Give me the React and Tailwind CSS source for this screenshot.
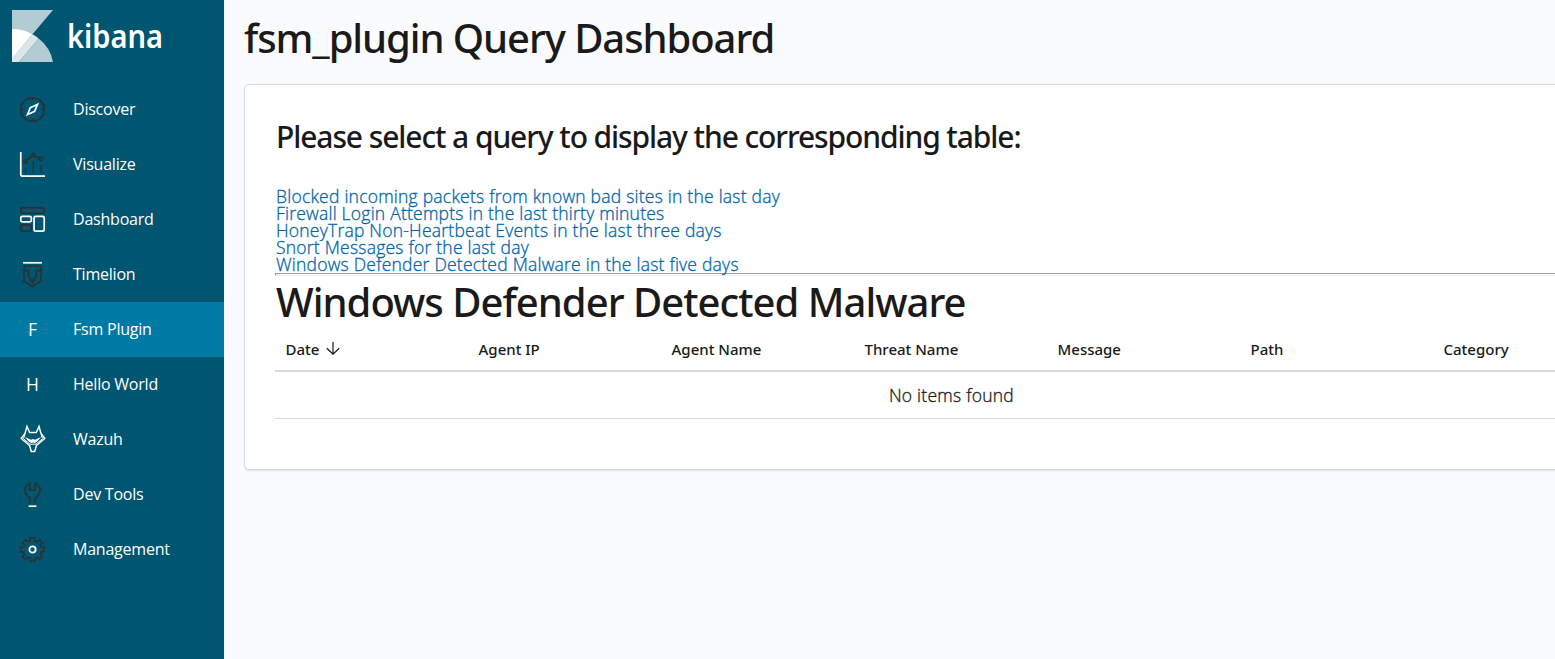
const DARK = '#2d3032'

function Icon({ children }) {
  return (
    <svg className="size-[25px] overflow-visible" viewBox="0 0 32 32" fill="none" stroke={DARK} strokeWidth="2.2">
      {children}
    </svg>
  )
}

const DiscoverIcon = () => (
  <Icon>
    <circle cx="16" cy="16" r="15" />
    <path d="M16 1v3.500M16 27.500v3.500M1 16h3.500M27.500 16h3.500" />
    <path stroke="#fff" d="M9.600 22.600l3.600-9 9.200-4.200-3.700 9z" />
  </Icon>
)

const VisualizeIcon = () => (
  <Icon>
    <path stroke="#fff" d="M1 0v28a3 3 0 0 0 3 3h28" />
    <path strokeWidth="1.800" d="M7 20v7M17 12v15M27 17v10" />
    <circle cx="7" cy="12" r="2" />
    <circle cx="17" cy="4" r="2" />
    <circle cx="27" cy="9" r="2" />
    <path d="M8.600 10.600l6.800-5.400M18.800 5l6.400 3.200" />
  </Icon>
)

const DashboardIcon = () => (
  <Icon>
    <rect x="1" y="1" width="30" height="7" rx="2" />
    <rect x="1" y="23" width="13.500" height="8" rx="2" />
    <rect stroke="#fff" x="1" y="12" width="13.500" height="7" rx="2" />
    <rect stroke="#fff" x="18" y="12" width="13" height="19" rx="2" />
  </Icon>
)

const TimelionIcon = () => (
  <Icon>
    <path stroke="#fff" d="M4 1h24" />
    <path strokeWidth="2" d="M5 5h22v19.500L16 31 5 24.500z" />
    <path strokeWidth="2" d="M5 11h6v7.500l5 6 5-6V11h6M13.500 21.500v2.500l2.500 3 2.500-3v-2.500" />
  </Icon>
)

const WazuhIcon = () => (
  <svg className="h-[30px] w-[26px] overflow-visible" viewBox="0 0 26 30" fill="none" stroke="#fff" strokeWidth="1.500">
    <path d="M7 1.500L5 8.500 1.200 13.500 9.500 20.500 11.300 26.500h3.400L16.500 20.500l8.300-7L21 8.500 19 1.500 16.300 7.500H9.700z" />
    <path strokeWidth="1" d="M5 9.500l-1.500 4.200 6.500 5.500h6l6.500-5.500L21 9.500" />
    <path fill="#fff" stroke="none" d="M4.800 12l6.200 2.800 2-.8 2 .8 6.200-2.800-4.400 5-2.800 1.200-1-1-1 1-2.800-1.200z" />
  </svg>
)

const DevToolsIcon = () => (
  <Icon>
    <path stroke="#fff" d="M11 31h10" />
    <path d="M12.500 27.500v-7.700A10 10 0 0 1 12.500 1.500V10h7V1.500a10 10 0 0 1 0 18.300v7.700" />
  </Icon>
)

const ManagementIcon = () => (
  <Icon>
    <circle stroke="#fff" strokeWidth="2.400" cx="16" cy="16" r="4" />
    <path strokeWidth="1.900" d="M13 1h6v4l3 1.300 3-2.800 3.700 3.800-2.700 2.900 1.200 2.800H31v6h-3.800L26 22l2.700 2.800-3.900 3.900L22 26l-3 1.200V31h-6v-3.800L10 26l-2.800 2.700-3.900-3.900L6 22l-1.200-3H1v-6h3.800L6 10.200 3.300 7.300 7 3.500l3 2.800L13 5z" />
  </Icon>
)

const Letter = ({ children }) => <span className="text-[17.5px] leading-none text-white">{children}</span>

const nav = [
  ['Discover', <DiscoverIcon />],
  ['Visualize', <VisualizeIcon />],
  ['Dashboard', <DashboardIcon />],
  ['Timelion', <TimelionIcon />],
  ['Fsm Plugin', <Letter>F</Letter>],
  ['Hello World', <Letter>H</Letter>],
  ['Wazuh', <WazuhIcon />],
  ['Dev Tools', <DevToolsIcon />],
  ['Management', <ManagementIcon />],
]

const queries = [
  'Blocked incoming packets from known bad sites in the last day',
  'Firewall Login Attempts in the last thirty minutes',
  'HoneyTrap Non-Heartbeat Events in the last three days',
  'Snort Messages for the last day',
  'Windows Defender Detected Malware in the last five days',
]

const columns = ['Date', 'Agent IP', 'Agent Name', 'Threat Name', 'Message', 'Path', 'Category']

function Sidebar() {
  return (
    <nav className="w-56 shrink-0 bg-[#005571] text-white">
      <div className="flex h-[82px] items-start pl-3 pt-2.5">
        <svg className="h-[52px] w-[41px]" viewBox="0 0 41 52" shapeRendering="geometricPrecision">
          <path fill="#b2ccd4" d="M0 0h41L20.500 24.300 0 30z" />
          <path fill="#b2ccd4" d="M26.700 28.500A38 38 0 0 1 41 52H7z" />
          <path fill="#d9e6ea" d="M20.500 24.300a41 41 0 0 1 6.200 4.200L7 52H0v-4z" />
          <path fill="#fff" d="M0 19a41 41 0 0 1 20.500 5.300L0 48.500z" />
        </svg>
        <span className="ml-[14px] mt-[3px] origin-left scale-x-[.88] font-['Noto_Sans'] text-[33px] font-semibold leading-[46px]">kibana</span>
      </div>
      {nav.map(([label, icon]) => (
        <a key={label} className={`flex h-[55px] items-center ${label === 'Fsm Plugin' ? 'bg-[#0079a5]' : ''}`}>
          <span className="flex w-[65px] justify-center">{icon}</span>
          <span className="ml-2 pb-0.5 text-[16px] leading-5 tracking-[-0.22px]">{label}</span>
        </a>
      ))}
    </nav>
  )
}

export default function App() {
  return (
    <div className="flex h-[659px] w-[1555px] overflow-hidden bg-[#fafbfd] font-['Open_Sans',sans-serif] text-[#1a1a1a]">
      <Sidebar />
      <main className="min-w-0 flex-1 pl-5">
        <h1 className="h-[84px] whitespace-nowrap pt-[13px] font-['Noto_Sans'] text-[40px] font-medium leading-[50px] tracking-[-1.08px]">fsm_plugin Query Dashboard</h1>
        <section className="h-[386px] w-[1413px] rounded-[5px] border border-[#d3dae6] bg-white px-[30px] shadow-[0_2px_2px_-1px_rgba(152,162,179,0.3)]">
          <h2 className="pl-px pt-8 font-['Noto_Sans'] text-[30px] font-medium leading-10 tracking-[-1.1px]">Please select a query to display the corresponding table:</h2>
          <ul className="mt-[31px]">
            {queries.map((q) => (
              <li key={q} className="h-[17px] pl-px text-[17.5px] font-light leading-[17px] tracking-[0.23px] text-[#0065af] [-webkit-text-stroke:0.3px]">{q}</li>
            ))}
          </ul>
          <hr className="h-[3px] border border-b-[#eee] border-l-[#9a9a9a] border-r-[#eee] border-t-[#9a9a9a]" />
          <h1 className="h-[51px] pl-px pt-px font-['Noto_Sans'] text-[40px] font-medium leading-[50px] tracking-[-0.98px]">Windows Defender Detected Malware</h1>
          <table className="w-[1351px] table-fixed">
            <thead>
              <tr className="h-[44px] border-b-2 border-[#d3dae6]">
                {columns.map((c) => (
                  <th key={c} className="pl-[10.5px] text-left font-['Noto_Sans'] text-[15px] font-medium leading-5">
                    <span className="flex items-center">
                      {c}
                      {c === 'Date' && (
                        <svg className="ml-[7px] h-[13px] w-[14px]" viewBox="0 0 14 13" fill="none" stroke="#1a1a1a" strokeWidth="1.2">
                          <path d="M7 0v12M.8 6.200L7 12.200l6.200-6" />
                        </svg>
                      )}
                    </span>
                  </th>
                ))}
              </tr>
            </thead>
            <tbody>
              <tr className="h-[47px] border-b border-[#d3dae6]">
                <td colSpan={7} className="pl-0.5 text-center text-[17.5px] font-light tracking-[0.25px] [-webkit-text-stroke:0.3px]">No items found</td>
              </tr>
            </tbody>
          </table>
        </section>
      </main>
    </div>
  )
}
